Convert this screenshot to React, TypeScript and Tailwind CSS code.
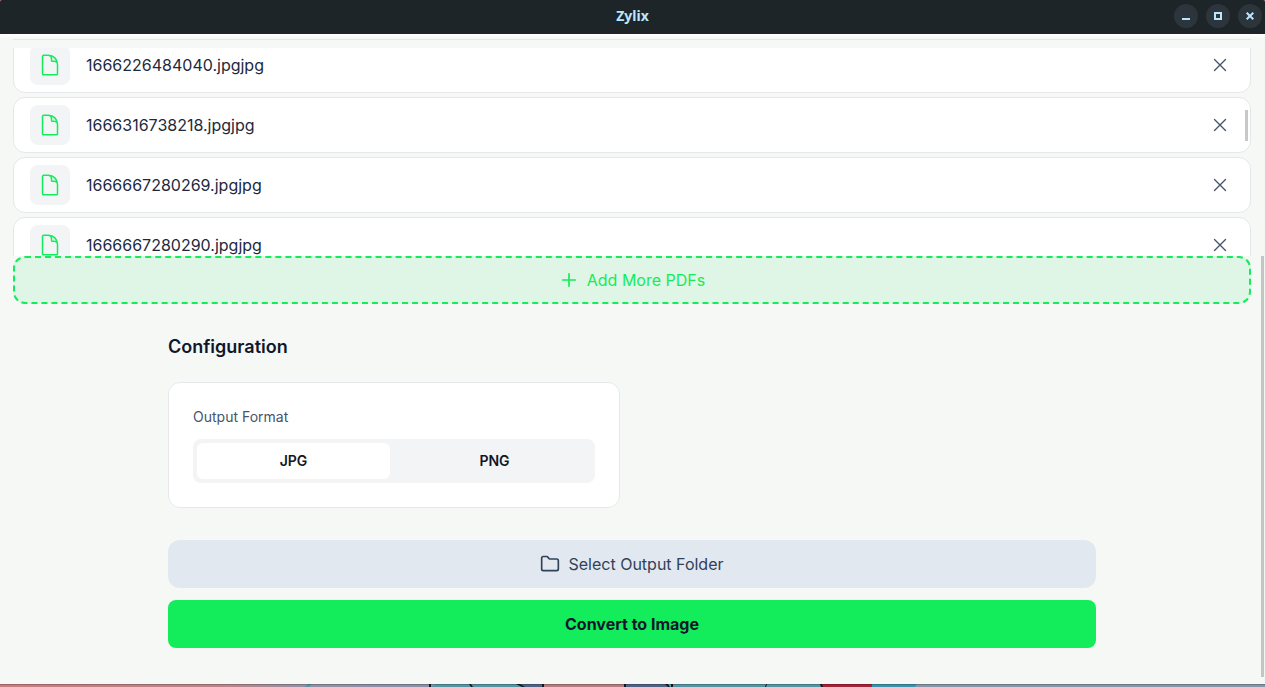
import { useState } from "react";
import { HiOutlineDocument, HiOutlinePlus, HiOutlineXMark } from "react-icons/hi2";
import { Folder } from "lucide-react";

const initialFiles = [
  "1666226484040.jpgjpg",
  "1666316738218.jpgjpg",
  "1666667280269.jpgjpg",
  "1666667280290.jpgjpg",
];

const formats = ["JPG", "PNG"];

const TitleBar = () => {
  return (
    <header className="relative flex h-[34px] items-center justify-center rounded-t-[2px] bg-[#1e2529] pb-0.5">
      <h1 className="font-['Noto_Sans',sans-serif] text-sm font-bold text-[#b9e6fe]">Zylix</h1>
      <div className="absolute top-1 right-[3px] flex gap-2 text-[#b9e6fe]">
        <button type="button" aria-label="Minimize" className="flex size-6 items-center justify-center rounded-full bg-[#2c353b]">
          <svg className="size-2" viewBox="0 0 8 8" fill="currentColor">
            <path d="M0 6h8v2H0z" />
          </svg>
        </button>
        <button type="button" aria-label="Maximize" className="flex size-6 items-center justify-center rounded-full bg-[#2c353b]">
          <svg className="size-2" viewBox="0 0 8 8" fill="none" stroke="currentColor" strokeWidth="2">
            <path d="M1 1h6v6H1z" />
          </svg>
        </button>
        <button type="button" aria-label="Close" className="flex size-6 items-center justify-center rounded-full bg-[#2c353b]">
          <svg className="size-2" viewBox="0 0 8 8" fill="none" stroke="currentColor" strokeWidth="2">
            <path d="M0.7 0.7l6.6 6.6M7.3 0.7L0.7 7.3" />
          </svg>
        </button>
      </div>
    </header>
  );
};

const FileRow = ({ name, onRemove }: { name: string; onRemove: () => void }) => {
  return (
    <li className="flex h-14 shrink-0 items-center gap-4 rounded-xl border border-gray-200 bg-white px-4">
      <div className="flex size-10 shrink-0 items-center justify-center rounded-lg bg-gray-100">
        <HiOutlineDocument className="size-6 text-[#13ec5b]" />
      </div>
      <p className="flex-1 truncate text-base text-slate-800">{name}</p>
      <button type="button" aria-label={`Remove ${name}`} onClick={onRemove} className="flex size-7 items-center justify-center text-slate-600">
        <HiOutlineXMark className="size-[22px]" />
      </button>
    </li>
  );
};

const App = () => {
  const [files, setFiles] = useState(initialFiles);
  const [format, setFormat] = useState("JPG");

  return (
    <div className="flex min-h-screen flex-col bg-[#c98588] font-['Inter',sans-serif]">
      <TitleBar />

      <main className="relative flex-1 bg-[#f6f8f6] pr-[14px] pb-9 pl-[13px]">
        <div className="-mr-[14px] -ml-[13px] h-1 bg-gradient-to-b from-white to-[#f6f8f6]" />
        <div className="h-[10px] pt-px">
          <div className="border-t border-gray-200" />
        </div>

        {/* scrolled list of picked files */}
        <div className="relative h-52 overflow-hidden">
          <ul className="-mt-[11px] flex flex-col gap-1">
            {files.map((name) => (
              <FileRow key={name} name={name} onRemove={() => setFiles(files.filter((f) => f !== name))} />
            ))}
          </ul>
          <div className="absolute top-[62px] right-[3px] h-[31px] w-[3px] bg-[#c8c8c8]" />
        </div>

        <button
          type="button"
          className="flex h-12 w-full items-center justify-center gap-2 rounded-xl border-2 border-dashed border-[#13ec5b] bg-[#dff5e6] text-base text-[#13ec5b]"
        >
          <HiOutlinePlus className="size-5 stroke-2" />
          <span>Add More PDFs</span>
        </button>

        <div className="mx-auto max-w-[960px] px-4">
          <h2 className="pt-8 pb-6 text-lg leading-[22px] font-semibold text-slate-900">Configuration</h2>

          <div className="grid grid-cols-1 gap-6 md:grid-cols-2">
            <fieldset className="rounded-xl border border-gray-200 bg-white p-6">
              <legend className="float-left mb-3 w-full text-sm text-slate-600">Output Format</legend>
              <div className="clear-both grid h-11 grid-cols-2 gap-2 rounded-lg bg-gray-100 p-1">
                {formats.map((item) => (
                  <label
                    key={item}
                    className="flex cursor-pointer items-center justify-center rounded-md text-sm font-semibold text-slate-900 has-checked:bg-white"
                  >
                    <input
                      type="radio"
                      name="format"
                      value={item}
                      checked={format === item}
                      onChange={() => setFormat(item)}
                      className="sr-only"
                    />
                    {item}
                  </label>
                ))}
              </div>
            </fieldset>
          </div>

          <div className="mt-8 flex flex-col gap-3">
            <button type="button" className="flex h-12 items-center justify-center gap-2 rounded-xl bg-slate-200 text-base text-slate-700">
              <Folder className="size-5" />
              <span>Select Output Folder</span>
            </button>
            <button type="button" className="h-12 rounded-lg bg-[#13ec5b] text-base font-bold text-slate-900">
              Convert to Image
            </button>
          </div>
        </div>

        <div className="absolute top-[222px] right-px bottom-[7px] w-[3px] bg-[#c4c6c4]" />
      </main>

      {/* sliver of the desktop wallpaper under the window */}
      <svg className="h-[3px] w-full" viewBox="0 0 1265 3" preserveAspectRatio="none">
        <defs>
          <linearGradient id="wall" x1="0" x2="1">
            <stop offset="0" stopColor="#c87c80" />
            <stop offset="0.18" stopColor="#b98588" />
            <stop offset="0.24" stopColor="#9490a4" />
            <stop offset="0.34" stopColor="#8a90a6" />
          </linearGradient>
        </defs>
        <path fill="url(#wall)" d="M0 0h1265v3H0z" />
        <path fill="#5295a3" d="M308 0h4l-3 3h-4zM436 0h87v3h-92zM670 0h152v3H670z" />
        <path fill="#4f6285" d="M517 0h25v3h-18zM626 0h40l2 3h-42z" />
        <path fill="#b57d80" d="M544 0h80v3h-80z" />
        <path fill="#a52138" d="M821 0h51v3h-50z" />
        <path fill="#3b93a9" d="M872 0h45l-2 3h-43z" />
        <path fill="#8596a8" d="M917 0h348v3H915z" />
        <path fill="#17171c" d="M429 0h2v3h-2zM469 0h2l2 3h-2zM516 0h4l5 3h-3zM542 0h2v3h-2zM624 0h2v3h-2zM665 0h3l2 3h-2zM671 0h2v3h-2zM766 0h1l-1 3h-1zM820 0h2l1 3h-2z" />
        <path fill="#000" fillOpacity="0.2" d="M0 0h1265v1H0z" />
      </svg>
    </div>
  );
};

export default App;
